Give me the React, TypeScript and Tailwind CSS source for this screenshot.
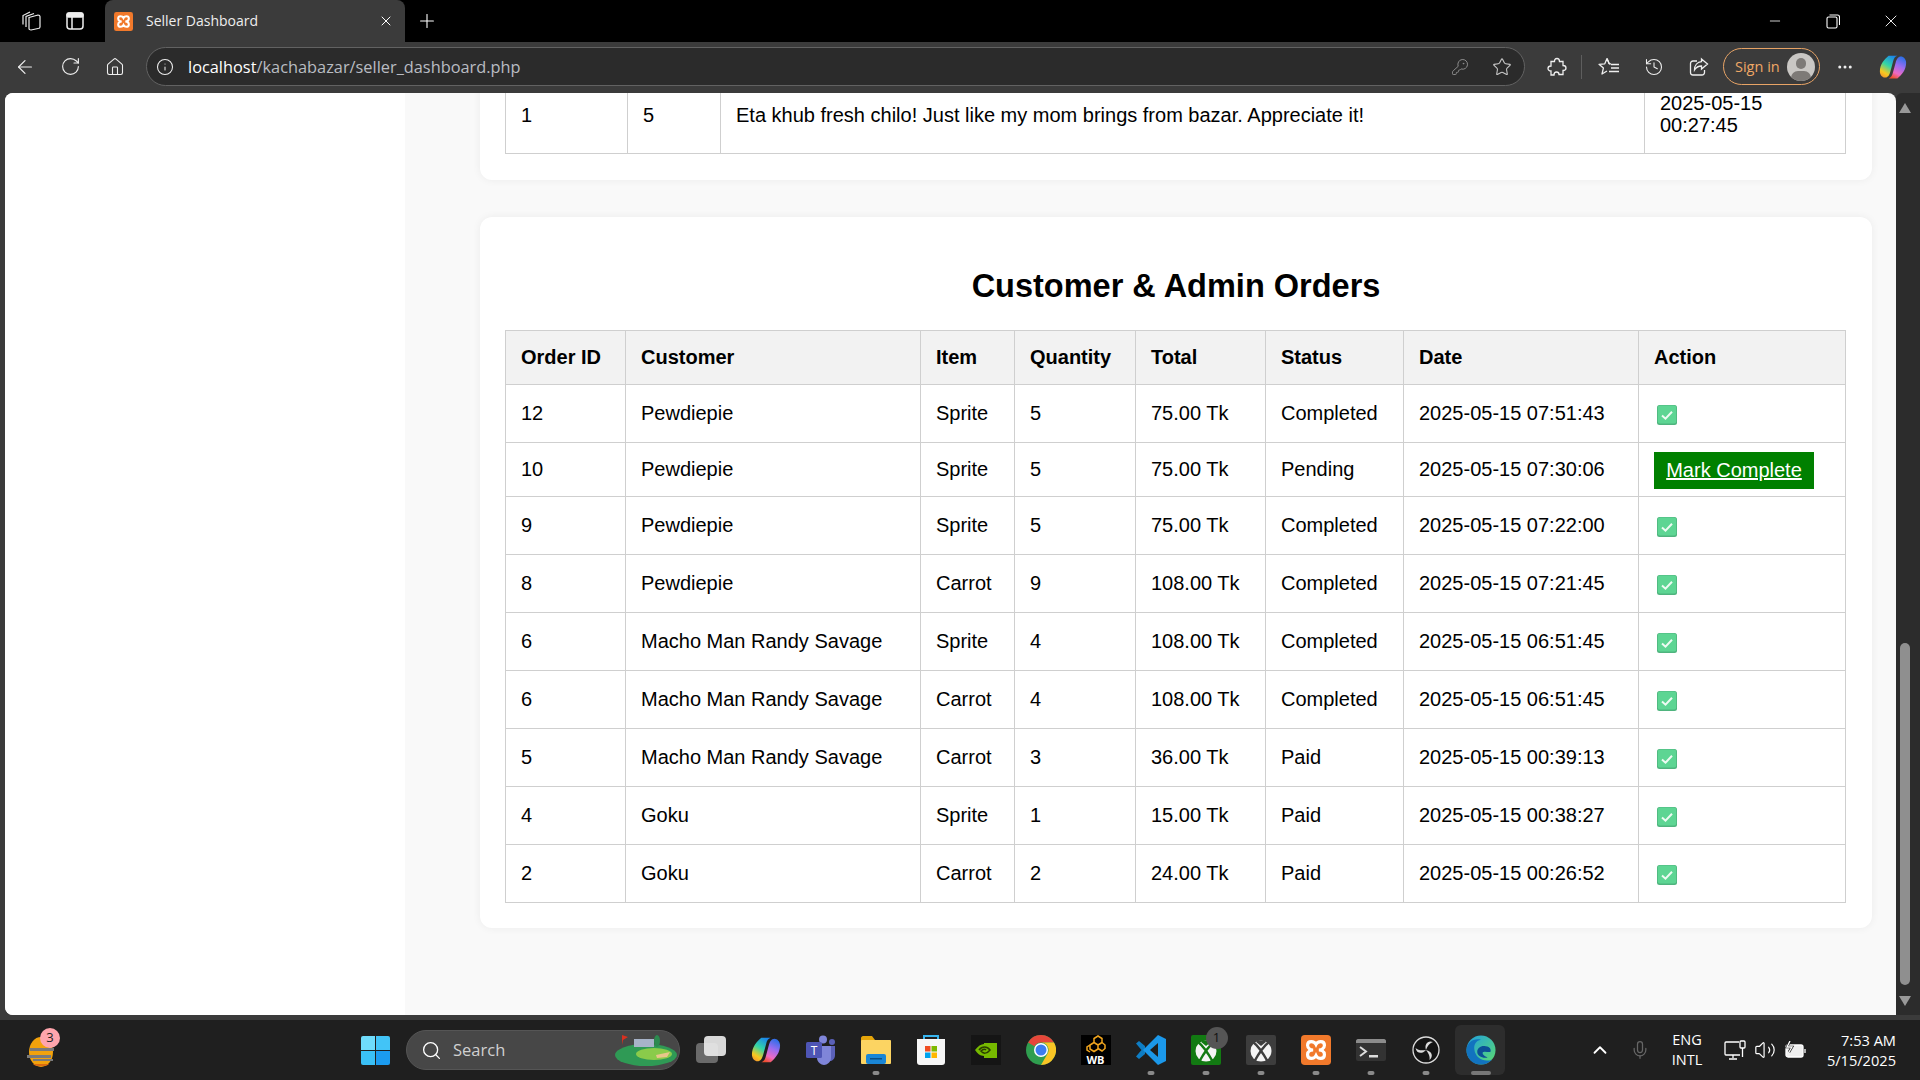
import {
  ArrowLeft,
  ChevronUp,
  History,
  Home,
  Info,
  KeyRound,
  Mic,
  Minus,
  MoreHorizontal,
  Plus,
  RotateCw,
  Search,
  Star,
  Volume2,
  X,
} from "lucide-react";

const ORDERS = [
  { id: "12", customer: "Pewdiepie", item: "Sprite", qty: "5", total: "75.00 Tk", status: "Completed", date: "2025-05-15 07:51:43", h: "h-[58px]" },
  { id: "10", customer: "Pewdiepie", item: "Sprite", qty: "5", total: "75.00 Tk", status: "Pending", date: "2025-05-15 07:30:06", h: "h-[54px]" },
  { id: "9", customer: "Pewdiepie", item: "Sprite", qty: "5", total: "75.00 Tk", status: "Completed", date: "2025-05-15 07:22:00", h: "h-[58px]" },
  { id: "8", customer: "Pewdiepie", item: "Carrot", qty: "9", total: "108.00 Tk", status: "Completed", date: "2025-05-15 07:21:45", h: "h-[58px]" },
  { id: "6", customer: "Macho Man Randy Savage", item: "Sprite", qty: "4", total: "108.00 Tk", status: "Completed", date: "2025-05-15 06:51:45", h: "h-[58px]" },
  { id: "6", customer: "Macho Man Randy Savage", item: "Carrot", qty: "4", total: "108.00 Tk", status: "Completed", date: "2025-05-15 06:51:45", h: "h-[58px]" },
  { id: "5", customer: "Macho Man Randy Savage", item: "Carrot", qty: "3", total: "36.00 Tk", status: "Paid", date: "2025-05-15 00:39:13", h: "h-[58px]" },
  { id: "4", customer: "Goku", item: "Sprite", qty: "1", total: "15.00 Tk", status: "Paid", date: "2025-05-15 00:38:27", h: "h-[58px]" },
  { id: "2", customer: "Goku", item: "Carrot", qty: "2", total: "24.00 Tk", status: "Paid", date: "2025-05-15 00:26:52", h: "h-[58px]" },
];

const HEADERS = ["Order ID", "Customer", "Item", "Quantity", "Total", "Status", "Date", "Action"];
const COLS = ["w-[120px]", "w-[295px]", "w-[94px]", "w-[121px]", "w-[130px]", "w-[138px]", "w-[235px]", "w-[207px]"];

const cell = "border border-[#cfcfcf] px-[15px] pb-[2px] text-left align-middle";
const reviewCell = "border border-[#cfcfcf] px-[15px] text-left align-middle";

function CheckMark() {
  return (
    <svg width="20" height="20" viewBox="0 0 20 20" className="mt-[5px] block">
      <rect width="20" height="20" rx="2.5" fill="#4fb47e" />
      <rect x="0.8" y="0.6" width="18.4" height="18" rx="2" fill="#5dd593" />
      <path d="M5 10.5l3.5 3.2L15 6.8" fill="none" stroke="#eefbf3" strokeWidth="2" />
    </svg>
  );
}

function XamppIcon({ size }: { size: number }) {
  return (
    <svg width={size} height={size} viewBox="0 0 32 32">
      <rect width="32" height="32" rx="4" fill="#f1792b" />
      <path
        d="M13 16c-2 0-6-1-6-5 0-3 2-4 4-4s4 1 5 3c1-2 3-3 5-3s4 1 4 4c0 4-4 5-6 5 2 0 6 1 6 5 0 3-2 4-4 4s-4-1-5-3c-1 2-3 3-5 3s-4-1-4-4c0-4 4-5 6-5z"
        fill="none"
        stroke="#fff"
        strokeWidth="3.4"
      />
    </svg>
  );
}

function CopilotIcon({ size, id }: { size: number; id: string }) {
  return (
    <svg width={size} height={size} viewBox="0 0 32 32">
      <defs>
        <linearGradient id={`${id}L`} x1="0.7" y1="0" x2="0.2" y2="1">
          <stop offset="0" stopColor="#1b86ea" />
          <stop offset="0.45" stopColor="#34d6a6" />
          <stop offset="0.8" stopColor="#f8c81f" />
          <stop offset="1" stopColor="#f59a2b" />
        </linearGradient>
        <linearGradient id={`${id}R`} x1="0.7" y1="0" x2="0.3" y2="1">
          <stop offset="0" stopColor="#2d6fe8" />
          <stop offset="0.4" stopColor="#9a6cf0" />
          <stop offset="0.75" stopColor="#ee6ac4" />
          <stop offset="1" stopColor="#ef4f30" />
        </linearGradient>
      </defs>
      <path d="M11 3h10c-3 1-4 3-5 7l-3 11c-1 4-3 7-6 7-3 0-6-3-6-7 0-8 5-14 10-18z" fill={`url(#${id}L)`} />
      <path d="M21 29H11c3-1 4-3 5-7l3-11c1-4 3-7 6-7 3 0 6 3 6 7 0 8-5 14-10 18z" fill={`url(#${id}R)`} />
    </svg>
  );
}

function EdgeIcon() {
  return (
    <svg width="30" height="30" viewBox="0 0 32 32">
      <defs>
        <linearGradient id="edA" x1="0" y1="0" x2="1" y2="1">
          <stop offset="0" stopColor="#1f9fdf" />
          <stop offset="1" stopColor="#5ddc6d" />
        </linearGradient>
      </defs>
      <circle cx="16" cy="16" r="15.500" fill="url(#edA)" />
      <path d="M.5 16C1 7 9 3 16 5c-6 1-8 6-7 11 1 8 10 14 19 10-3 3-7 5.500-12 5.500C7 31.500.5 25 .5 16z" fill="#1273bf" />
      <path d="M12 18c0-4 4-7 9-6 5 .5 6 4 5 6-2 .5-7-1-8 .5-1 1.500 1 4 5 5.500-6 1-11-2-11-6z" fill="#0c4f96" />
    </svg>
  );
}

function ChromeIcon() {
  return (
    <svg width="30" height="30" viewBox="0 0 30 30">
      <circle cx="15" cy="15" r="15" fill="#2f9e4f" />
      <path d="M15 0a15 15 0 0 1 13 7.500H15a7.500 7.500 0 0 0-6.500 3.750L2.100 7.400A15 15 0 0 1 15 0z" fill="#e6463a" />
      <path d="M28 7.500A15 15 0 0 1 15 30l6.500-11.250A7.500 7.500 0 0 0 15 7.500z" fill="#f9c525" />
      <circle cx="15" cy="15" r="7" fill="#fff" />
      <circle cx="15" cy="15" r="5.500" fill="#3c7df0" />
    </svg>
  );
}

function XboxIcon({ bg }: { bg: string }) {
  return (
    <svg width="30" height="30" viewBox="0 0 30 30">
      <rect width="30" height="30" rx="2" fill={bg} />
      <circle cx="15" cy="16" r="10.500" fill="#f4f4f4" />
      <path d="M7 7c4 3 10 11 15 20M23 7c-4 3-10 11-15 20" fill="none" stroke={bg} strokeWidth="2.4" />
      <path d="M9.500 6.500c3-1.500 8-1.500 11 0l-5.500 4.500z" fill={bg} />
    </svg>
  );
}

function Slot({ children, dot, wide }: { children?: React.ReactNode; dot?: boolean; wide?: boolean }) {
  return (
    <div className="relative flex h-[50px] w-[55px] items-center justify-center">
      {wide && <span className="absolute inset-y-0 left-[2px] right-[3px] rounded-md bg-[#2d2d2d]" />}
      <span className="relative">{children}</span>
      {dot && <span className="absolute -bottom-[0px] left-1/2 h-[4px] w-[7px] -translate-x-1/2 rounded-full bg-[#8a8a8a]" />}
      {wide && <span className="absolute bottom-0 left-1/2 h-[4px] w-[20px] -translate-x-1/2 rounded-full bg-[#777]" />}
    </div>
  );
}

function TitleBar() {
  return (
    <div className="flex h-[42px] shrink-0 items-center bg-black text-white">
      <div className="flex w-[105px] items-center pl-[21px]">
        <svg width="20" height="20" viewBox="0 0 20 20" fill="none" stroke="#eee" strokeWidth="1.200">
          <path d="M8 6.500l9-2.500c1 0 2 .5 2 1.500V16c0 1-1 1.500-2 1.500L10 19c-1 0-2-.5-2-1.500z" />
          <path d="M5 16V5.500L13 2.500M2 13.500V4.500L9 1" />
        </svg>
        <svg className="ml-[25px]" width="18" height="18" viewBox="0 0 18 18" fill="none" stroke="#eee" strokeWidth="1.500">
          <rect x="1" y="1" width="16" height="16" rx="3" />
          <path d="M6 5v12" />
          <rect x="1" y="1" width="16" height="4" rx="1.500" fill="#eee" />
        </svg>
      </div>
      <div className="flex h-[42px] w-[300px] items-center self-end rounded-t-lg bg-[#3b3b3b] pl-[9px] pr-[11px]">
        <XamppIcon size={19} />
        <span className="ml-[13px] flex-1 pb-[2px] text-[14px] text-[#eee] [font-family:'Open_Sans',sans-serif]">Seller Dashboard</span>
        <X size={16} strokeWidth={1.5} />
      </div>
      <Plus className="ml-[11px]" size={22} strokeWidth={1.2} />
      <div className="ml-auto flex items-center">
        <div className="flex w-[58px] justify-center">
          <Minus size={16} strokeWidth={1.2} />
        </div>
        <div className="flex w-[58px] justify-center">
          <svg width="14" height="15" viewBox="0 0 14 15" fill="none" stroke="#fff" strokeWidth="1.100">
            <rect x="1" y="3" width="10" height="11" rx="1.500" />
            <path d="M3.500 1h8c1 0 2 1 2 2v8" />
          </svg>
        </div>
        <div className="flex w-[58px] justify-center pr-[1px]">
          <X size={20} strokeWidth={1.1} />
        </div>
      </div>
    </div>
  );
}

function ToolBar() {
  return (
    <div className="flex h-[51px] shrink-0 items-center bg-[#3b3b3b] pb-[2px] text-[#eee]">
      <div className="flex w-[146px] items-center pl-[14px]">
        <ArrowLeft size={22} strokeWidth={1.3} />
        <RotateCw className="ml-[24px]" size={21} strokeWidth={1.3} />
        <Home className="ml-[24px]" size={20} strokeWidth={1.3} />
      </div>
      <div className="flex h-[39px] w-[1379px] items-center rounded-full border border-[#626262] bg-[#2b2b2b] pl-[9px] pr-[12px]">
        <Info size={18} strokeWidth={1.4} />
        <span className="ml-[14px] flex-1 pt-[1px] text-[16.35px] text-[#b9bcc2] [font-family:'Open_Sans',sans-serif]">
          <span className="text-white">localhost</span>/kachabazar/seller_dashboard.php
        </span>
        <KeyRound className="text-[#8d8d8d]" size={18} strokeWidth={1.3} />
        <Star className="ml-[23px] text-[#c8c8c8]" size={20} strokeWidth={1.3} />
      </div>
      <svg className="ml-[22px]" width="20" height="20" viewBox="0 0 20 20" fill="none" stroke="#eee" strokeWidth="1.300">
        <path d="M10 1.500c2 0 2.500 1.500 2.500 3H16v4c1.800 0 3 1 3 2.500s-1.200 2.500-3 2.500v4h-4c0-1.500-1-2.500-2.500-2.500S7 16.500 7 18H4v-4c-1.800 0-3-1-3-2.500S2.200 9 4 9V4.500h3.500c0-1.500.5-3 2.500-3z" />
      </svg>
      <div className="ml-[14px] h-[24px] w-px bg-[#5e5e5e]" />
      <svg className="ml-[16px]" width="22" height="20" viewBox="0 0 22 20" fill="none" stroke="#eee" strokeWidth="1.300" strokeLinejoin="round">
        <path d="M9 1.500l2.200 5.300h-0.200M9 1.500L6.800 6.800 1 7.300l4.400 3.800L4 17l5-3" />
        <path d="M9 1.500l2.200 5.300H13" />
        <path d="M13 7.500h8M13 11h8M11 14.500h10" />
      </svg>
      <History className="ml-[24px]" size={20} strokeWidth={1.3} />
      <svg className="ml-[25px]" width="20" height="20" viewBox="0 0 20 20" fill="none" stroke="#eee" strokeWidth="1.300">
        <path d="M8 4H4a2.500 2.500 0 0 0-2.500 2.500v9A2.500 2.500 0 0 0 4 18h9a2.500 2.500 0 0 0 2.500-2.500V13" />
        <path d="M12.500 2l6 5-6 5V9c-3.500 0-5.500 1.500-7 4 0-5 3-8 7-8.300z" />
      </svg>
      <div className="ml-[14px] flex h-[37px] w-[97px] items-center rounded-full border border-[#e8a466] pl-[11px]">
        <span className="text-[14.5px] text-[#efa866] [font-family:'Open_Sans',sans-serif]">Sign in</span>
        <span className="relative ml-[7px] h-[28px] w-[28px] overflow-hidden rounded-full bg-[#c9c7c4]">
          <span className="absolute left-[9px] top-[5px] h-[11px] w-[10px] rounded-full bg-[#7d7a77]" />
          <span className="absolute left-[4px] top-[18px] h-[14px] w-[20px] rounded-full bg-[#7d7a77]" />
        </span>
      </div>
      <MoreHorizontal className="ml-[16px]" size={18} strokeWidth={2} />
      <span className="ml-[25px]">
        <CopilotIcon size={28} id="cpTop" />
      </span>
    </div>
  );
}

function Page() {
  return (
    <div className="flex min-h-0 flex-1 bg-[#3b3b3b] pl-[5px]">
      <div className="flex min-w-0 flex-1 overflow-hidden rounded-t-lg rounded-bl-lg bg-[#f9f9f9] text-[20px] text-black [font-family:'Liberation_Sans',Arial,sans-serif]">
        <aside className="w-[400px] shrink-0 bg-white" />
        <main className="flex w-[1491px] flex-col gap-[37px] pl-[75px] pr-[24px]">
          <section className="-mt-[18px] rounded-xl bg-white px-[25px] pb-[26px] shadow-[0_0_8px_rgba(0,0,0,0.06)]">
            <table className="w-[1340px] table-fixed border-collapse">
              <tbody>
                <tr className="h-[78px]">
                  <td className={`${reviewCell} w-[122px]`}>1</td>
                  <td className={`${reviewCell} w-[93px]`}>5</td>
                  <td className={`${reviewCell} w-[924px]`}>Eta khub fresh chilo! Just like my mom brings from bazar. Appreciate it!</td>
                  <td className={`${cell} w-[201px] leading-[22px]`}>2025-05-15 00:27:45</td>
                </tr>
              </tbody>
            </table>
          </section>
          <section className="rounded-xl bg-white px-[25px] pb-[25px] pt-[25px] shadow-[0_0_8px_rgba(0,0,0,0.06)]">
            <h2 className="mb-[25px] mt-[26px] text-center text-[32.5px] leading-[37px] font-bold">Customer &amp; Admin Orders</h2>
            <table className="w-[1340px] table-fixed border-collapse">
              <thead>
                <tr className="h-[54px] bg-[#f2f2f2]">
                  {HEADERS.map((h, i) => (
                    <th key={h} className={`${cell} ${COLS[i]} font-bold`}>
                      {h}
                    </th>
                  ))}
                </tr>
              </thead>
              <tbody>
                {ORDERS.map((o) => (
                  <tr key={o.date + o.item} className={o.h}>
                    <td className={cell}>{o.id}</td>
                    <td className={cell}>{o.customer}</td>
                    <td className={cell}>{o.item}</td>
                    <td className={cell}>{o.qty}</td>
                    <td className={cell}>{o.total}</td>
                    <td className={cell}>{o.status}</td>
                    <td className={cell}>{o.date}</td>
                    <td className={`${cell} !pl-[18px]`}>
                      {o.status === "Pending" ? (
                        <a href="#" className="-ml-[3px] mt-[3px] block w-[160px] bg-[#008000] py-[6px] text-center text-white underline leading-[25px]">
                          Mark Complete
                        </a>
                      ) : (
                        <CheckMark />
                      )}
                    </td>
                  </tr>
                ))}
              </tbody>
            </table>
          </section>
        </main>
      </div>
      <div className="flex w-[24px] shrink-0 flex-col items-start rounded-tl-md bg-[#2c2c2c] pb-[9px] pl-[3px] pt-[10px]">
        <span className="h-0 w-0 border-x-[6px] border-b-[10px] border-x-transparent border-b-[#999]" />
        <span className="mb-[11px] ml-[1px] mt-[530px] w-[10px] flex-1 rounded-full bg-[#8f8f8f]" />
        <span className="h-0 w-0 border-x-[6px] border-t-[10px] border-x-transparent border-t-[#999]" />
      </div>
    </div>
  );
}

function TaskBar() {
  return (
    <div className="flex h-[60px] shrink-0 items-center border-t-[5px] border-[#3b3b3b] bg-[#1f1f1f] box-content text-white [font-family:'Open_Sans',sans-serif]">
      <div className="relative ml-[27px] w-[334px]">
        <svg width="28" height="32" viewBox="0 0 28 32" className="mt-[2px]">
          <ellipse cx="14" cy="17" rx="12" ry="15" fill="#f2a20c" />
          <path d="M6 29h16c-2 3-14 3-16 0z" fill="#d96a12" />
          <path d="M0 20h24v3H0zM3 13h24v3H3zM6 24h20v2H6z" fill="#7a7a7a" />
        </svg>
        <span className="absolute left-[13px] -top-[5px] flex h-[20px] w-[20px] items-center justify-center rounded-full bg-[#ffa5ad] text-[13px] text-[#222]">3</span>
      </div>
      <div className="grid h-[29px] w-[29px] grid-cols-2 gap-[1px]">
        <span className="rounded-tl-[2px] bg-[#6fdcfb]" />
        <span className="rounded-tr-[2px] bg-[#42c4f7]" />
        <span className="rounded-bl-[2px] bg-[#3ac0f6]" />
        <span className="rounded-br-[2px] bg-[#1b9bef]" />
      </div>
      <div className="ml-[16px] flex h-[40px] w-[274px] items-center rounded-full border border-[#555] bg-[#474747] pl-[14px]">
        <Search size={21} strokeWidth={1.5} />
        <span className="ml-[11px] flex-1 text-[16.5px] text-[#d0d0d0]">Search</span>
        <svg width="64" height="34" viewBox="0 0 64 34" className="mr-[1px]">
          <ellipse cx="32" cy="22" rx="31" ry="11" fill="#2f9a55" />
          <ellipse cx="40" cy="21" rx="18" ry="6" fill="#8acb4a" />
          <path d="M42 22l14-3-3 5-10 1z" fill="#e9c68a" />
          <rect x="20" y="6" width="20" height="8" fill="#a7b3c8" />
          <path d="M8 12V2l6 2-5 3" fill="#d9301f" />
          <ellipse cx="43" cy="8" rx="3" ry="6" fill="#2c8a50" />
        </svg>
      </div>
      <div className="ml-[3px] flex">
        <Slot>
          <span className="relative block h-[30px] w-[30px]">
            <span className="absolute left-0 top-[8px] h-[20px] w-[22px] rounded-sm bg-[#6a6a6a]" />
            <span className="absolute right-0 top-[1px] h-[20px] w-[22px] rounded-sm bg-[#ececec] opacity-90" />
          </span>
        </Slot>
        <Slot>
          <CopilotIcon size={30} id="cpBar" />
        </Slot>
        <Slot>
          <svg width="30" height="30" viewBox="0 0 30 30">
            <circle cx="17" cy="4.500" r="4" fill="#7f85d9" />
            <circle cx="26" cy="7" r="3" fill="#5b61b9" />
            <path d="M20 11h9v9c0 4-3 6-5 6z" fill="#5b61b9" />
            <path d="M11 11h14v12c0 4-4 7-7 7s-7-3-7-7z" fill="#7f85d9" />
            <rect x="0" y="7" width="16" height="16" rx="1.500" fill="#4e55b5" />
            <text x="8" y="19.500" textAnchor="middle" fontSize="12" fill="#fff" fontFamily="'Open Sans',sans-serif">T</text>
          </svg>
        </Slot>
        <Slot dot>
          <svg width="30" height="28" viewBox="0 0 30 28">
            <path d="M0 2c0-1 1-2 2-2h9l3 4h14c1 0 2 1 2 2v4H0z" fill="#e5a50a" />
            <rect y="4" width="30" height="24" rx="1" fill="#fcd462" />
            <rect x="5" y="18" width="20" height="10" rx="2" fill="#1a86d6" />
            <rect x="9" y="22" width="12" height="1.500" fill="#0b4f86" />
          </svg>
        </Slot>
        <Slot>
          <svg width="30" height="30" viewBox="0 0 30 30">
            <path d="M8 6V1h14v5" fill="none" stroke="#38b6f0" strokeWidth="2" />
            <path d="M1 4h28v23c0 2-1 3-3 3H4c-2 0-3-1-3-3z" fill="#f7f7f7" />
            <rect x="9" y="11" width="5.500" height="5.500" fill="#f04e23" />
            <rect x="15.500" y="11" width="5.500" height="5.500" fill="#7eb900" />
            <rect x="9" y="17.500" width="5.500" height="5.500" fill="#00a3ee" />
            <rect x="15.500" y="17.500" width="5.500" height="5.500" fill="#ffb700" />
          </svg>
        </Slot>
        <Slot>
          <svg width="30" height="30" viewBox="0 0 30 30">
            <rect width="30" height="30" fill="#151515" />
            <path d="M4 15c3-4 6-6 9-6V8h13v15H13v-2c-4 0-7-3-9-6z" fill="#76b900" />
            <path d="M8 15c3-4 8-4 11 0-3 4-7 4-9 1 2-2 4-2 5-1" fill="none" stroke="#2a3d00" strokeWidth="1.500" />
          </svg>
        </Slot>
        <Slot>
          <ChromeIcon />
        </Slot>
        <Slot>
          <div className="flex h-[30px] w-[30px] flex-col items-center bg-black">
            <svg width="20" height="19" viewBox="0 0 20 19" fill="none" stroke="#f0a51e" strokeWidth="1.500">
              <path d="M12 1l4 2.500v4L12 10 8 7.500v-4zM8 7.500L4 10v4l4 2.500 4-2.500v-4M16 7.500L19 10v3.500L16 16l-4-2.500M4 10L1 12v3l3 2" />
            </svg>
            <span className="text-[11px] leading-[11px] font-bold text-white">WB</span>
          </div>
        </Slot>
        <Slot dot>
          <svg width="30" height="30" viewBox="0 0 30 30">
            <path d="M9 11L3 6 0 8.500 5.500 15 0 21.500 3 24l6-5z" fill="#0e7dc4" />
            <path d="M22 0l8 4v22l-8 4L7 15z" fill="#1b98ea" />
            <path d="M22 8l-8 7 8 7z" fill="#1f1f1f" />
          </svg>
        </Slot>
        <Slot dot>
          <div className="relative">
            <XboxIcon bg="#127a12" />
            <span className="absolute -right-[7px] -top-[8px] flex h-[22px] w-[22px] items-center justify-center rounded-full bg-[#555] text-[13px] text-[#111]">1</span>
          </div>
        </Slot>
        <Slot dot>
          <XboxIcon bg="#3d3d3d" />
        </Slot>
        <Slot dot>
          <XamppIcon size={30} />
        </Slot>
        <Slot dot>
          <svg width="30" height="22" viewBox="0 0 30 22">
            <rect width="30" height="22" rx="2" fill="#333" />
            <path d="M0 2c0-1 1-2 2-2h26c1 0 2 1 2 2v2H0z" fill="#8c8c8c" />
            <path d="M4 8l6 4.500-6 4.500" fill="none" stroke="#ddd" strokeWidth="2" />
            <rect x="13" y="16" width="9" height="2.500" fill="#ddd" />
          </svg>
        </Slot>
        <Slot dot>
          <svg width="28" height="28" viewBox="0 0 28 28">
            <circle cx="14" cy="14" r="13" fill="#141414" stroke="#dcdcdc" strokeWidth="1.300" />
            <g fill="#dcdcdc">
              <path d="M14 14C12 8 16 4 21 6c-3 1-5 3-7 8z" />
              <path d="M14 14C12 8 16 4 21 6c-3 1-5 3-7 8z" transform="rotate(120 14 14)" />
              <path d="M14 14C12 8 16 4 21 6c-3 1-5 3-7 8z" transform="rotate(240 14 14)" />
            </g>
          </svg>
        </Slot>
        <Slot wide>
          <EdgeIcon />
        </Slot>
      </div>
      <ChevronUp className="ml-[81px]" size={22} strokeWidth={2} />
      <Mic className="ml-[19px] text-[#666]" size={20} strokeWidth={1.5} />
      <div className="ml-[20px] w-[34px] text-center text-[14.5px] leading-[20px]">
        <div>ENG</div>
        <div>INTL</div>
      </div>
      <svg className="ml-[20px]" width="22" height="22" viewBox="0 0 22 22" fill="none" stroke="#fff" strokeWidth="1.300">
        <path d="M15 3H2c-.5 0-1 .5-1 1v11c0 .500.500 1 1 1h14M9 16v3M5 20h8" />
        <rect x="16" y="2" width="5" height="7" rx="1" />
        <path d="M18.500 9v9" />
      </svg>
      <Volume2 className="ml-[8px]" size={22} strokeWidth={1.3} />
      <svg className="ml-[8px]" width="22" height="18" viewBox="0 0 22 18" fill="none" stroke="#fff" strokeWidth="1.300">
        <rect x="2" y="4" width="17" height="12" rx="2" fill="#f0f0f0" />
        <path d="M21 8v4" />
        <path d="M6 0L3 6h5l-3 5" stroke="#1f1f1f" strokeWidth="2.500" />
        <path d="M6 0L3 6h5l-3 5" />
      </svg>
      <div className="ml-auto pr-[24px] text-right text-[14.6px] leading-[20px]">
        <div>7:53 AM</div>
        <div>5/15/2025</div>
      </div>
    </div>
  );
}

export default function App() {
  return (
    <div className="flex h-screen w-full flex-col overflow-hidden bg-[#1f1f1f]">
      <TitleBar />
      <ToolBar />
      <Page />
      <TaskBar />
    </div>
  );
}
